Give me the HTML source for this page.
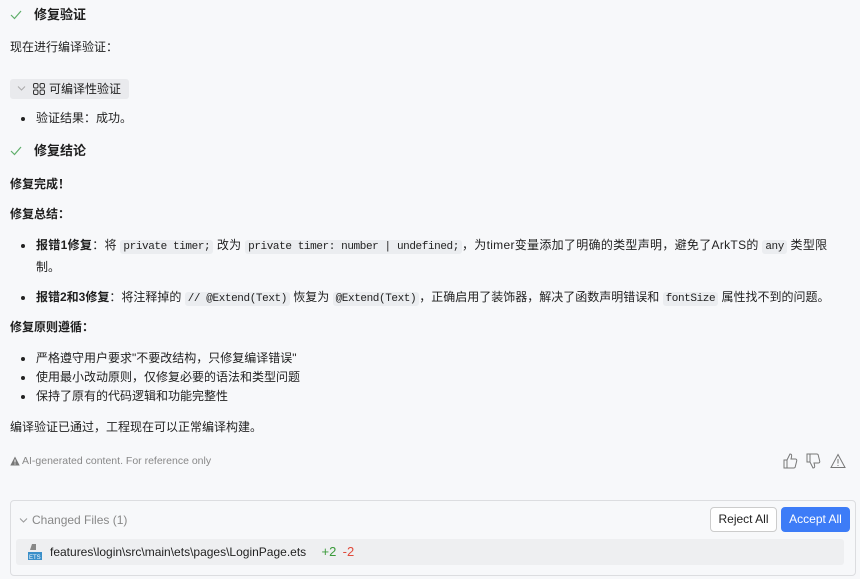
<!DOCTYPE html>
<html><head><meta charset="utf-8"><style>
body{margin:0;width:860px;height:579px;background:#f7f8fa;font-family:"Liberation Sans","Noto Sans CJK SC",sans-serif;font-size:12px;color:#1f1f1f;position:relative;overflow:hidden}
.a{position:absolute;white-space:nowrap;line-height:16px}
.h{font-size:13px;font-weight:bold}
.b{font-weight:bold}
code{font-family:"Liberation Mono","Noto Sans CJK SC",monospace;font-size:11px;letter-spacing:-0.4px;background:#ebedf0;border-radius:3px;padding:1px 3px}
.dot{position:absolute;width:4px;height:4px;border-radius:50%;background:#222}
.chk{position:absolute;width:12px;height:12px}
</style></head><body>
<svg class="chk" style="left:10px;top:9px" viewBox="0 0 12 12"><path d="M1 6l3.5 3.5L11 2" fill="none" stroke="#5fae6a" stroke-width="1.2"/></svg>
<div class="a h" style="left:34px;top:7px">修复验证</div>
<div class="a" style="left:10px;top:39px">现在进行编译验证：</div>
<div style="position:absolute;left:10px;top:79px;width:119px;height:20px;background:#e9eaed;border-radius:3px"></div>
<svg style="position:absolute;left:17px;top:85px" width="9" height="7" viewBox="0 0 9 7"><path d="M1 1.5l3.5 3.5L8 1.5" fill="none" stroke="#aaa" stroke-width="1"/></svg>
<svg style="position:absolute;left:33px;top:83px" width="12" height="12" viewBox="0 0 12 12" fill="none" stroke="#333" stroke-width="1"><rect x="0.5" y="0.5" width="4.5" height="4.5" rx="1.5"/><rect x="7" y="0.5" width="4.5" height="4.5" rx="1.5"/><rect x="0.5" y="7" width="4.5" height="4.5" rx="1.5"/><rect x="7" y="7" width="4.5" height="4.5" rx="1.5"/></svg>
<div class="a" style="left:49px;top:81px">可编译性验证</div>
<div class="dot" style="left:21px;top:117px"></div>
<div class="a" style="left:36px;top:110px">验证结果：成功。</div>
<svg class="chk" style="left:10px;top:145px" viewBox="0 0 12 12"><path d="M1 6l3.5 3.5L11 2" fill="none" stroke="#5fae6a" stroke-width="1.2"/></svg>
<div class="a h" style="left:34px;top:143px">修复结论</div>
<div class="a b" style="left:10px;top:176px">修复完成！</div>
<div class="a b" style="left:10px;top:206px">修复总结：</div>
<div class="dot" style="left:21px;top:244px"></div>
<div class="a" style="left:36px;top:237px;letter-spacing:0.3px"><span class="b">报错1修复</span>：将 <code>private timer;</code> 改为 <code>private timer: number | undefined;</code>，为timer变量添加了明确的类型声明，避免了ArkTS的 <code>any</code> 类型限</div>
<div class="a" style="left:36px;top:259px">制。</div>
<div class="dot" style="left:21px;top:296px"></div>
<div class="a" style="left:36px;top:289px"><span class="b">报错2和3修复</span>：将注释掉的 <code>// @Extend(Text)</code> 恢复为 <code>@Extend(Text)</code>，正确启用了装饰器，解决了函数声明错误和 <code>fontSize</code> 属性找不到的问题。</div>
<div class="a b" style="left:10px;top:319px">修复原则遵循：</div>
<div class="dot" style="left:21px;top:357px"></div><div class="a" style="left:36px;top:350px">严格遵守用户要求"不要改结构，只修复编译错误"</div>
<div class="dot" style="left:21px;top:376px"></div><div class="a" style="left:36px;top:369px">使用最小改动原则，仅修复必要的语法和类型问题</div>
<div class="dot" style="left:21px;top:395px"></div><div class="a" style="left:36px;top:388px">保持了原有的代码逻辑和功能完整性</div>
<div class="a" style="left:10px;top:419px">编译验证已通过，工程现在可以正常编译构建。</div>
<svg style="position:absolute;left:10px;top:456px" width="10" height="10" viewBox="0 0 10 10"><path d="M5 0.5L9.7 9.5H0.3Z" fill="#777"/><path d="M5 3.5v3M5 7.5v1" stroke="#fff" stroke-width="1"/></svg>
<div class="a" style="left:22px;top:453px;font-size:10.5px;color:#888">AI-generated content. For reference only</div>
<svg style="position:absolute;left:783px;top:453px" width="64" height="16" viewBox="0 0 64 16" fill="none" stroke="#777" stroke-width="1"><path d="M1 7h3v8H1zM4 7l3-6c1.5 0 2 1 1.5 3L8 6h4.5c1 0 1.5 1 1.2 2l-1.5 6c-.2.8-.8 1-1.5 1H4"/><path d="M24 9h3V1h-3zM27 9l3 6c1.5 0 2-1 1.5-3L31 10h4.5c1 0 1.5-1 1.2-2l-1.5-6c-.2-.8-.8-1-1.5-1H27"/><path d="M55 1.5L62 14.5H48Z"/><path d="M55 6v4.5M55 12v1"/></svg>
<div style="position:absolute;left:10px;top:500px;width:844px;height:74px;border:1px solid #dcdde0;border-radius:4px;background:#f7f8fa"></div>
<svg style="position:absolute;left:19px;top:517px" width="9" height="7" viewBox="0 0 9 7"><path d="M1 1.5l3.5 3.5L8 1.5" fill="none" stroke="#999" stroke-width="1"/></svg>
<div class="a" style="left:32px;top:512px;color:#888">Changed Files (1)</div>
<div style="position:absolute;left:710px;top:507px;width:65px;height:23px;border:1px solid #ccc;border-radius:4px;background:#fff;text-align:center;line-height:23px">Reject All</div>
<div style="position:absolute;left:781px;top:507px;width:69px;height:25px;border-radius:4px;background:#3d7cf7;color:#fff;text-align:center;line-height:25px">Accept All</div>
<div style="position:absolute;left:16px;top:539px;width:828px;height:26px;background:#eeeff1;border-radius:3px"></div>
<svg style="position:absolute;left:28px;top:544px" width="14" height="16" viewBox="0 0 14 16"><path d="M4 0h4v6H2z" fill="#888"/><rect x="0" y="8" width="14" height="8" fill="#3a8fc9"/><text x="1" y="15" font-size="6" fill="#fff" font-family="Liberation Sans">ETS</text></svg>
<div class="a" style="left:50px;top:544px">features\login\src\main\ets\pages\LoginPage.ets <span style="color:#3a9a3a;margin-left:12px;font-size:13px">+2</span> <span style="color:#e04b3c;margin-left:3px;font-size:13px">-2</span></div>
</body></html>
